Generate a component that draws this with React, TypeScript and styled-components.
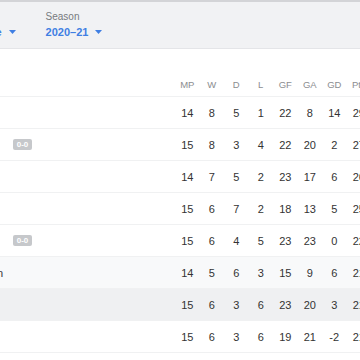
import React from "react";
import styled, { createGlobalStyle } from "styled-components";

const GlobalStyle = createGlobalStyle`
  html, body {
    margin: 0;
    padding: 0;
    background: #ffffff;
    font-family: "Liberation Sans", Arial, sans-serif;
  }
`;

interface ITeam {
  name: string;
  live?: string;
  stats: number[];
  tone?: "soft" | "grey";
}

const teams: ITeam[] = [
  { name: "Villarreal", stats: [14, 8, 5, 1, 22, 8, 14, 29] },
  { name: "Real Sociedad", live: "0-0", stats: [15, 8, 3, 4, 22, 20, 2, 27] },
  { name: "Sevilla", stats: [14, 7, 5, 2, 23, 17, 6, 26] },
  { name: "Atlético Madrid", stats: [15, 6, 7, 2, 18, 13, 5, 25] },
  { name: "Real Betis", live: "0-0", stats: [15, 6, 4, 5, 23, 23, 0, 22] },
  { name: "Brighton & Hove Albion", stats: [14, 5, 6, 3, 15, 9, 6, 21], tone: "soft" },
  { name: "Valencia", stats: [15, 6, 3, 6, 23, 20, 3, 21], tone: "grey" },
  { name: "Getafe", stats: [15, 6, 3, 6, 19, 21, -2, 21] },
];

const columns = ["MP", "W", "D", "L", "GF", "GA", "GD", "Pts"];

const Viewport = styled.div`
  width: 360px;
  height: 360px;
  overflow: hidden;
`;

const Page = styled.div`
  width: 571px;
  margin-left: -200px;
`;

const FilterBar = styled.div`
  height: 46px;
  display: flex;
  gap: 30px;
  padding-left: 119px;
  background: #f1f2f4;
  border-top: 2px solid #d3d4d7;
  border-bottom: 1px solid #e4e5e8;
`;

const Filter = styled.div`
  display: flex;
  flex-direction: column;
  padding-top: 9px;
  gap: 2px;
`;

const FilterLabel = styled.span`
  font-size: 10px;
  line-height: 12px;
  color: #777a7e;
`;

const FilterValue = styled.span`
  display: flex;
  align-items: center;
  gap: 7px;
  font-size: 11px;
  line-height: 14px;
  font-weight: 700;
  color: #3f7fe3;
  white-space: nowrap;
`;

const Caret = () => (
  <svg width="7" height="4" viewBox="0 0 7 4">
    <polygon points="0,0 7,0 3.5,4" fill="#3f7fe3" />
  </svg>
);

const TableRow = styled.div<{ $tone?: "soft" | "grey"; $head?: boolean }>`
  display: grid;
  grid-template-columns: 1fr repeat(8, 24.5px);
  align-items: center;
  height: ${(p) => (p.$head ? "24px" : "31px")};
  margin-top: ${(p) => (p.$head ? "23px" : "0")};
  border-bottom: 1px solid #f0f1f2;
  background: ${(p) =>
    p.$tone === "soft" ? "#f8f9fa" : p.$tone === "grey" ? "#eff0f2" : "transparent"};
`;

const TeamCell = styled.div`
  display: grid;
  grid-template-columns: 205px auto;
  column-gap: 8px;
  align-items: center;
`;

const TeamName = styled.span`
  padding-left: 90px;
  font-size: 11px;
  color: #333;
  white-space: nowrap;
`;

const LiveBadge = styled.span`
  width: 19px;
  height: 11px;
  display: flex;
  align-items: center;
  justify-content: center;
  border-radius: 2px;
  background: #c6c8cb;
  color: #ffffff;
  font-size: 8px;
  font-weight: 700;
`;

const HeadCell = styled.span`
  text-align: center;
  font-size: 9.5px;
  color: #8b8d90;
  white-space: nowrap;
`;

const StatCell = styled.span`
  text-align: center;
  font-size: 11px;
  color: #333;
  white-space: nowrap;
`;

export default function App() {
  return (
    <Viewport>
      <GlobalStyle />
      <Page>
        <FilterBar>
          <Filter>
            <FilterLabel>League</FilterLabel>
            <FilterValue>
              Premier League <Caret />
            </FilterValue>
          </Filter>
          <Filter>
            <FilterLabel>Season</FilterLabel>
            <FilterValue>
              2020–21 <Caret />
            </FilterValue>
          </Filter>
        </FilterBar>

        <TableRow $head>
          <span />
          {columns.map((c) => (
            <HeadCell key={c}>{c}</HeadCell>
          ))}
        </TableRow>

        {teams.map((t) => (
          <TableRow key={t.name} $tone={t.tone}>
            <TeamCell>
              <TeamName>{t.name}</TeamName>
              {t.live && <LiveBadge>{t.live}</LiveBadge>}
            </TeamCell>
            {t.stats.map((s, i) => (
              <StatCell key={i}>{s}</StatCell>
            ))}
          </TableRow>
        ))}
      </Page>
    </Viewport>
  );
}
